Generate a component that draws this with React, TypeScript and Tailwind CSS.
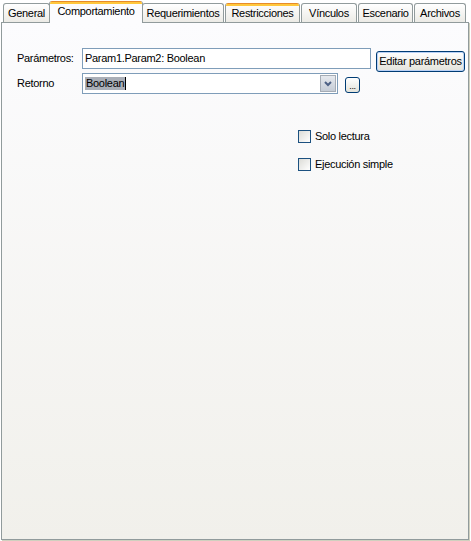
import React from "react";

const tabs = [
  { label: "General", w: 47, state: "normal" },
  { label: "Comportamiento", w: 90, state: "selected" },
  { label: "Requerimientos", w: 82, state: "normal" },
  { label: "Restricciones", w: 75, state: "hover" },
  { label: "Vínculos", w: 56, state: "normal" },
  { label: "Escenario", w: 55, state: "normal" },
  { label: "Archivos", w: 52, state: "normal" },
];

function Tab({ label, w, state }: { label: string; w: number; state: string }) {
  if (state === "selected") {
    return (
      <div
        className="relative z-10 -mx-[2px] -mb-px flex h-[22px] flex-col overflow-hidden rounded-t-[3px] border-x border-[#919b9c] bg-[#fcfcfe]"
        style={{ width: w + 4 }}
      >
        <div className="h-[1px] bg-[#e68b2c]" />
        <div className="h-[2px] bg-[#ffc73c]" />
        <div className="flex flex-1 items-start justify-center whitespace-nowrap pt-[1px]">{label}</div>
      </div>
    );
  }
  return (
    <div
      className={`flex h-[19px] flex-col overflow-hidden rounded-t-[3px] border-x border-[#919b9c] bg-gradient-to-b from-white to-[#ecebe6] ${
        state === "hover" ? "" : "border-t"
      }`}
      style={{ width: w }}
    >
      {state === "hover" && (
        <>
          <div className="h-[1px] bg-[#e68b2c]" />
          <div className="h-[2px] bg-[#ffc73c]" />
        </>
      )}
      <div
        className={`flex flex-1 items-center justify-center whitespace-nowrap ${
          state === "hover" ? "-mt-[1px]" : "pt-[1px]"
        }`}
      >
        {label}
      </div>
    </div>
  );
}

function Checkbox({ label }: { label: string }) {
  return (
    <div className="flex h-[16px] items-center gap-[4px] whitespace-nowrap">
      <div className="h-[13px] w-[13px] border border-[#1c5180] bg-gradient-to-br from-[#dcdcd7] to-white" />
      <span>{label}</span>
    </div>
  );
}

export default function App() {
  return (
    <div
      className="flex h-[541px] w-[471px] flex-col bg-white pt-[2px] text-[11px] leading-[13px] tracking-[-0.3px] text-black"
      style={{ fontFamily: '"Liberation Sans", Arial, sans-serif' }}
    >
      <div className="flex h-[20px] items-end gap-[1px] pl-[3px]">
        {tabs.map((t) => (
          <Tab key={t.label} {...t} />
        ))}
      </div>
      <div className="ml-[1px] flex h-[518px] w-[468px] flex-col border border-[#919b9c] bg-gradient-to-b from-[#fcfcfe] to-[#f1f0eb] pt-[25px] shadow-[1px_1px_0_#d0d0bf]">
        <div className="flex items-start">
          <div className="flex h-[21px] w-[80px] items-center whitespace-nowrap pl-[15px]">Parámetros:</div>
          <div className="flex h-[21px] w-[289px] items-center whitespace-nowrap border border-[#7f9db9] bg-white pl-[2px]">
            Param1.Param2: Boolean
          </div>
          <button className="ml-[5px] mt-[3px] h-[21px] w-[89px] whitespace-nowrap rounded-[3px] border border-[#003c74] bg-gradient-to-b from-white to-[#e3e3db] px-0 text-[11px] tracking-[-0.3px] shadow-[inset_0_0_0_1px_#b9d1f6]">
            Editar parámetros
          </button>
        </div>
        <div className="mt-[1px] flex items-start">
          <div className="flex h-[21px] w-[80px] items-center pl-[15px]">Retorno</div>
          <div className="flex h-[21px] w-[256px] items-center border border-[#7f9db9] bg-white pl-[2px] pr-[1px]">
            <span className="bg-[#a9aeb7] px-[1px]">Boolean</span>
            <span className="h-[13px] w-[1px] bg-black" />
            <div className="flex-1" />
            <div className="flex h-[17px] w-[16px] items-center justify-center border border-[#a5acb5] bg-gradient-to-b from-[#e6e9ee] to-[#c5ccd6]">
              <svg width="8" height="6" viewBox="0 0 8 6">
                <path d="M1 1 L4 4 L7 1" fill="none" stroke="#4d6185" strokeWidth="2" />
              </svg>
            </div>
          </div>
          <button className="ml-[7px] mt-[4px] flex h-[16px] w-[15px] items-end justify-center rounded-[3px] border border-[#003c74] bg-gradient-to-b from-white to-[#e3e3db] pb-[1px] text-[9px] leading-none">
            ...
          </button>
        </div>
        <div className="mt-[34px] flex flex-col gap-[12px] pl-[296px]">
          <Checkbox label="Solo lectura" />
          <Checkbox label="Ejecución simple" />
        </div>
      </div>
    </div>
  );
}
